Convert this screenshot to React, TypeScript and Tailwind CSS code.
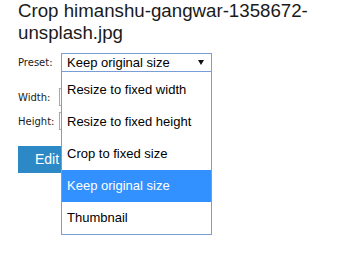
const options = [
  "Resize to fixed width",
  "Resize to fixed height",
  "Crop to fixed size",
  "Keep original size",
  "Thumbnail",
];

function App() {
  const selected = "Keep original size";

  return (
    <div className="w-[343px] h-[271px] bg-white pl-[18px] font-['Liberation_Sans',Arial,sans-serif] text-[#1a1a1a]">
      <h1 className="w-[320px] text-[18.7px] leading-[22px] font-normal">
        Crop himanshu-gangwar-1358672-unsplash.jpg
      </h1>

      <div className="mt-[9px] flex flex-col text-[10px] font-['DejaVu_Sans',Verdana,sans-serif]">
        {/* Preset row */}
        <div className="flex items-center h-[19px]">
          <span className="w-[43px]">Preset:</span>
          <div className="relative z-10 w-[151px]">
            <div className="flex items-center justify-between h-[19px] border border-[#7b9dd6] pl-[5px] pr-[7px] text-[13px] font-['Liberation_Sans',Arial,sans-serif] text-black bg-white">
              <span>{selected}</span>
              <svg width="6" height="5" viewBox="0 0 6 5">
                <path d="M0 0 L6 0 L3 5 Z" fill="#111" />
              </svg>
            </div>
            <ul className="absolute left-0 top-full w-[151px] border border-t-0 border-[#7b9dd6] bg-white pt-[2px] text-[13px] font-['Liberation_Sans',Arial,sans-serif]">
              {options.map((o) => (
                <li
                  key={o}
                  className={
                    o === selected
                      ? "h-[32px] flex items-center pl-[5px] bg-[#3390ff] text-white"
                      : "h-[32px] flex items-center pl-[5px] text-black"
                  }
                >
                  {o}
                </li>
              ))}
            </ul>
          </div>
        </div>

        {/* Width row */}
        <div className="flex items-center h-[18px] mt-[16px]">
          <span className="w-[41px]">Width:</span>
          <input className="h-[18px] w-[120px] border border-[#a9a9a9] bg-white" />
        </div>

        {/* Height row */}
        <div className="flex items-center h-[18px] mt-[6px]">
          <span className="w-[41px]">Height:</span>
          <input className="h-[18px] w-[120px] border border-[#a9a9a9] bg-white" />
        </div>

        <div className="mt-[16px]">
          <button className="h-[27px] px-[17px] bg-[#2d89c6] text-white text-[14px] font-['Liberation_Sans',Arial,sans-serif]">
            Edit
          </button>
        </div>
      </div>
    </div>
  );
}

export default App;
